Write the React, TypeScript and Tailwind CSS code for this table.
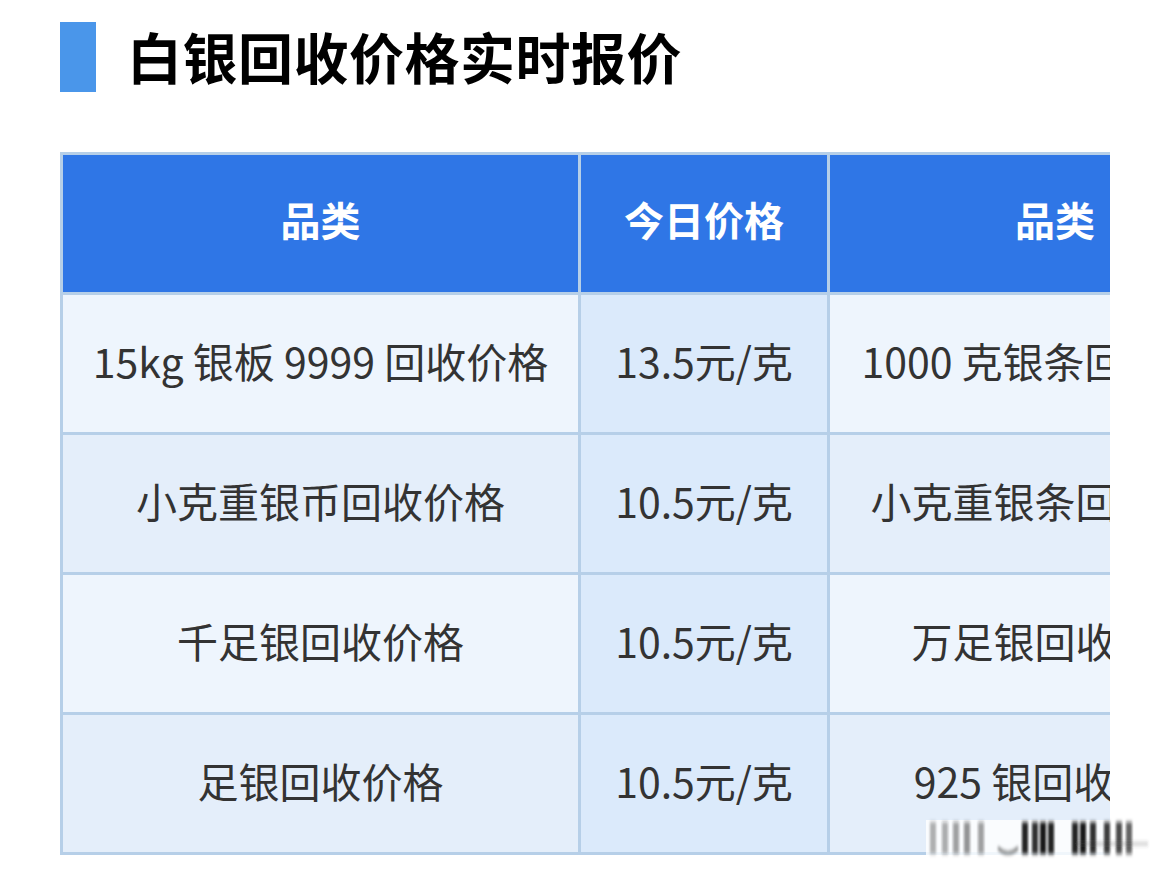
import React from 'react';

const rows = [
  { name: '15kg 银板 9999 回收价格', price: '13.5元/克', other: '1000 克银条回收价格', tint: 'bg-[#eef5fd]' },
  { name: '小克重银币回收价格', price: '10.5元/克', other: '小克重银条回收价格', tint: 'bg-[#e4eefa]' },
  { name: '千足银回收价格', price: '10.5元/克', other: '万足银回收价格', tint: 'bg-[#eef5fd]' },
  { name: '足银回收价格', price: '10.5元/克', other: '925 银回收价格', tint: 'bg-[#e4eefa]' },
];

// 模糊水印，右下角
function Watermark() {
  const bars = [
    [4, 0.3], [16, 0.35], [27, 0.4], [38, 0.45], [52, 0.4],
    [96, 0.9], [106, 0.85], [114, 0.95], [122, 0.9],
    [146, 0.9], [154, 0.95], [164, 0.85], [178, 0.8], [190, 0.75], [200, 0.65],
  ];
  return (
    <svg
      className="absolute left-[926px] top-[816px]"
      width="224"
      height="44"
      viewBox="0 0 224 44"
    >
      <defs>
        <filter id="wm-blur" x="-20%" y="-20%" width="140%" height="140%">
          <feGaussianBlur stdDeviation="1.3 2.2" />
        </filter>
      </defs>
      <rect x="0" y="4" width="212" height="36" fill="#ffffff" opacity="0.8" />
      <g filter="url(#wm-blur)">
        {bars.map(([x, o], i) => (
          <rect key={i} x={x} y="6" width="6" height="32" fill="#111" opacity={o} />
        ))}
        <path d="M72 32 q10 10 20 0" stroke="#111" strokeWidth="2" fill="none" opacity="0.8" />
        <rect x="150" y="27" width="72" height="1.5" fill="#444" opacity="0.6" />
      </g>
    </svg>
  );
}

export default function App() {
  const font = { fontFamily: '"Noto Sans CJK SC", "Noto Sans", sans-serif' };

  return (
    <div className="relative h-[878px] w-[1170px] overflow-hidden bg-white" style={font}>
      {/* 标题 */}
      <div className="flex items-center pl-[60px] pt-[22px]">
        <div className="h-[70px] w-[36px] bg-[#4a96ea]" />
        <h1 className="mb-[4px] ml-[31px] text-[55px] font-bold leading-none tracking-[0.5px] text-black">
          白银回收价格实时报价
        </h1>
      </div>

      {/* 价格表 */}
      <div className="ml-[60px] mt-[60px] w-[1050px] overflow-hidden">
        <div className="grid w-max grid-cols-[515px_246px_450px] auto-rows-[137px] gap-[3px] bg-[#b6cfe8] p-[3px]">
          <div className="flex items-center justify-center bg-[#2f76e6] pb-[10px] text-[40px] font-bold text-white">品类</div>
          <div className="flex items-center justify-center bg-[#2f76e6] pb-[10px] text-[40px] font-bold text-white">今日价格</div>
          <div className="flex items-center justify-center bg-[#2f76e6] pb-[10px] text-[40px] font-bold text-white">品类</div>

          {rows.map((r) => (
            <React.Fragment key={r.name}>
              <div className={`flex items-center justify-center pb-[6px] ${r.tint} text-[41px] text-[#333]`}>{r.name}</div>
              <div className="flex items-center justify-center bg-[#dbeafb] pb-[6px] text-[41px] text-[#333]">{r.price}</div>
              <div className={`flex items-center justify-center whitespace-nowrap pb-[6px] ${r.tint} text-[41px] text-[#333]`}>{r.other}</div>
            </React.Fragment>
          ))}
        </div>
      </div>

      <Watermark />
    </div>
  );
}
